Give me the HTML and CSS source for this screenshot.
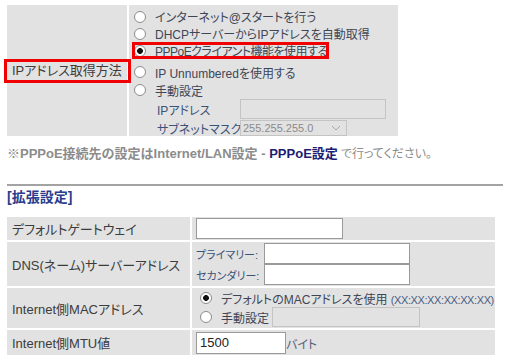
FILE: index.html
```html
<!DOCTYPE html>
<html lang="ja">
  <head>
    <meta charset="UTF-8" />
    <meta name="viewport" content="width=device-width, initial-scale=1.0" />
    <title>Internet設定</title>
    <link rel="stylesheet" href="styles.css">
  </head>
  <body>
    <table class="setting-table top-table">
      <tr>
        <td class="label-cell method-cell">
          <span class="mark-box">IPアドレス取得方法</span>
        </td>
        <td class="opts">
          <div class="opt"><input type="radio" name="ipmode" /><span>インターネット@スタートを行う</span></div>
          <div class="opt"><input type="radio" name="ipmode" /><span>DHCPサーバーからIPアドレスを自動取得</span></div>
          <div class="opt marked"><input type="radio" name="ipmode" checked /><span>PPPoEクライアント機能を使用する</span></div>
          <div class="opt gap"><input type="radio" name="ipmode" /><span>IP Unnumberedを使用する</span></div>
          <div class="opt tall"><input type="radio" name="ipmode" /><span>手動設定</span></div>
          <div class="sub">
            <span class="sub-label">IPアドレス</span>
            <input type="text" class="field ip-field" disabled />
          </div>
          <div class="sub sub-last">
            <span class="sub-label">サブネットマスク</span>
            <span class="select-wrap">
              <select class="mask-select" disabled>
                <option>255.255.255.0</option>
              </select>
              <svg class="chevron" width="10" height="6" viewBox="0 0 10 6">
                <path d="M1 1 L5 5 L9 1" fill="none" stroke="#a8a8a8" stroke-width="1" />
              </svg>
            </span>
          </div>
        </td>
      </tr>
    </table>

    <p class="note">
      <b>※PPPoE接続先の設定はInternet/LAN設定 - </b><a class="note-link">PPPoE設定</a><span class="note-tail">で行ってください。</span>
    </p>

    <div class="rule"></div>
    <h2 class="section-title">[拡張設定]</h2>

    <table class="setting-table ext-table">
      <tr class="row-gw">
        <td class="label-cell">デフォルトゲートウェイ</td>
        <td class="value-cell"><input type="text" class="field gw-field" /></td>
      </tr>
      <tr class="row-dns">
        <td class="label-cell">DNS(ネーム)サーバーアドレス</td>
        <td class="value-cell">
          <div class="dns-grid">
            <span class="sub-label">プライマリー:</span>
            <input type="text" class="field dns-field" />
            <span class="sub-label">セカンダリー:</span>
            <input type="text" class="field dns-field" />
          </div>
        </td>
      </tr>
      <tr class="row-mac">
        <td class="label-cell">Internet側MACアドレス</td>
        <td class="value-cell mac-cell">
          <div class="opt"><input type="radio" name="mac" checked /><span>デフォルトのMACアドレスを使用 <span class="mac-hint">(XX:XX:XX:XX:XX:XX)</span></span></div>
          <div class="opt mac-manual"><input type="radio" name="mac" /><span>手動設定</span><input type="text" class="field mac-field" disabled /></div>
        </td>
      </tr>
      <tr class="row-mtu">
        <td class="label-cell">Internet側MTU値</td>
        <td class="value-cell"><input type="text" class="field mtu-field" value="1500" /><span class="unit">バイト</span></td>
      </tr>
    </table>
  </body>
</html>
```

FILE: styles.css
```css
body {
  margin: 0;
  padding: 5px 7px 0;
  font-family: "Liberation Sans", "Noto Sans CJK JP", sans-serif;
  font-size: 12px;
  color: #3a3a3a;
  font-feature-settings: "palt";
  background: #fff;
}
.setting-table {
  border-collapse: separate;
  border-spacing: 2px;
  margin: -2px;
}
.label-cell,
.opts,
.value-cell {
  background-color: #e2e2e2;
  padding: 0;
}
.label-cell {
  padding-left: 5px;
  font-size: 13px;
  color: #3c3c3c;
  white-space: nowrap;
}
.top-table .method-cell {
  width: 120px;
  padding: 0;
}
.mark-box {
  display: inline-block;
  box-sizing: border-box;
  margin-left: -3px;
  margin-right: -4px;
  width: 127px;
  height: 24px;
  line-height: 18px;
  padding-left: 5px;
  border: 3px solid #f00000;
  font-size: 13px;
}
.opts {
  width: 264px;
  padding: 3px 0 0 5px;
  vertical-align: top;
}
.opt {
  display: flex;
  align-items: center;
  height: 17px;
  white-space: nowrap;
  color: #3e4656;
}
.opt.marked {
  position: relative;
  margin-bottom: 4px;
  letter-spacing: -0.5px;
}
.opt.marked::after {
  content: "";
  position: absolute;
  left: -2px;
  top: 0;
  width: 191px;
  height: 11px;
  border: 3px solid #f00000;
}
.opt.gap,
.opt.tall {
  height: 18px;
}
input[type="radio"] {
  appearance: none;
  width: 12px;
  height: 12px;
  margin: 0 9px 0 0;
  border: 1px solid #8c8c8c;
  border-radius: 50%;
  background: #fff;
  flex: none;
}
input[type="radio"]:checked {
  background: radial-gradient(circle, #111 0 2.6px, #fff 3.2px);
}
.sub {
  display: flex;
  align-items: center;
  height: 20px;
  padding-left: 23px;
  margin-bottom: 1px;
}
.sub.sub-last {
  height: 16px;
  margin-bottom: 0;
}
.sub-label {
  color: #3b5278;
  font-size: 12px;
  white-space: nowrap;
}
.sub .sub-label {
  width: 83px;
}
.field {
  box-sizing: border-box;
  height: 21px;
  margin: 0;
  padding: 1px 3px;
  border: 1px solid #9a9a9a;
  background: #fff;
  font-family: "Liberation Sans", sans-serif;
  font-size: 13px;
  color: #222;
}
.field:disabled {
  background: #e2e2e2;
  border-color: #c4c4c4;
}
.ip-field {
  width: 146px;
  height: 20px;
}
.select-wrap {
  position: relative;
  display: inline-block;
  height: 16px;
}
.mask-select {
  appearance: none;
  box-sizing: border-box;
  display: block;
  width: 107px;
  height: 16px;
  margin: 0;
  padding: 0 0 0 2px;
  border: 1px solid #c4c4c4;
  background: #e2e2e2;
  font-family: "Liberation Sans", sans-serif;
  font-size: 11px;
  color: #8a8a8a;
  opacity: 1;
}
.chevron {
  position: absolute;
  right: 6px;
  top: 5px;
}
.note {
  margin: 10px 0 0;
  line-height: 16px;
  color: #8c8c8c;
  font-size: 13px;
  font-feature-settings: normal;
}
.note b {
  font-weight: bold;
}
.note-link {
  color: #1d1d72;
  font-weight: bold;
  margin-right: 3px;
}
.note-tail {
  font-size: 12px;
  font-feature-settings: "palt";
}
.rule {
  height: 2px;
  margin: 22px -4px 0 0;
  background: #a3a3a3;
}
.section-title {
  margin: 2px 0 0;
  font-size: 14px;
  line-height: 18px;
  color: #2b3c8c;
  font-weight: bold;
}
.ext-table {
  margin-top: 9px;
  width: 492px;
  table-layout: fixed;
}
.ext-table .label-cell {
  width: 178px;
}
.value-cell {
  padding-left: 4px;
}
.row-gw td {
  height: 23px;
}
.row-dns td {
  height: 44px;
}
.row-mac td {
  height: 40px;
}
.row-mtu td {
  height: 25px;
}
.gw-field {
  width: 147px;
  vertical-align: middle;
}
.dns-grid {
  display: grid;
  grid-template-columns: 68px 146px;
  row-gap: 0;
  align-items: center;
}
.dns-grid .sub-label {
  font-size: 11px;
}
.dns-field {
  width: 146px;
  height: 21px;
}
.mac-cell {
  padding-left: 8px;
}
.mac-cell .opt {
  height: 18px;
  color: #3e4656;
}
.mac-hint {
  color: #4a5d85;
  font-size: 11px;
  letter-spacing: -0.4px;
}
.opt.mac-manual {
  height: 20px;
}
.mac-field {
  width: 148px;
  height: 20px;
  margin-left: 3px;
}
.mtu-field {
  width: 90px;
  height: 22px;
  vertical-align: middle;
}
.unit {
  color: #55607a;
  vertical-align: middle;
}
```
